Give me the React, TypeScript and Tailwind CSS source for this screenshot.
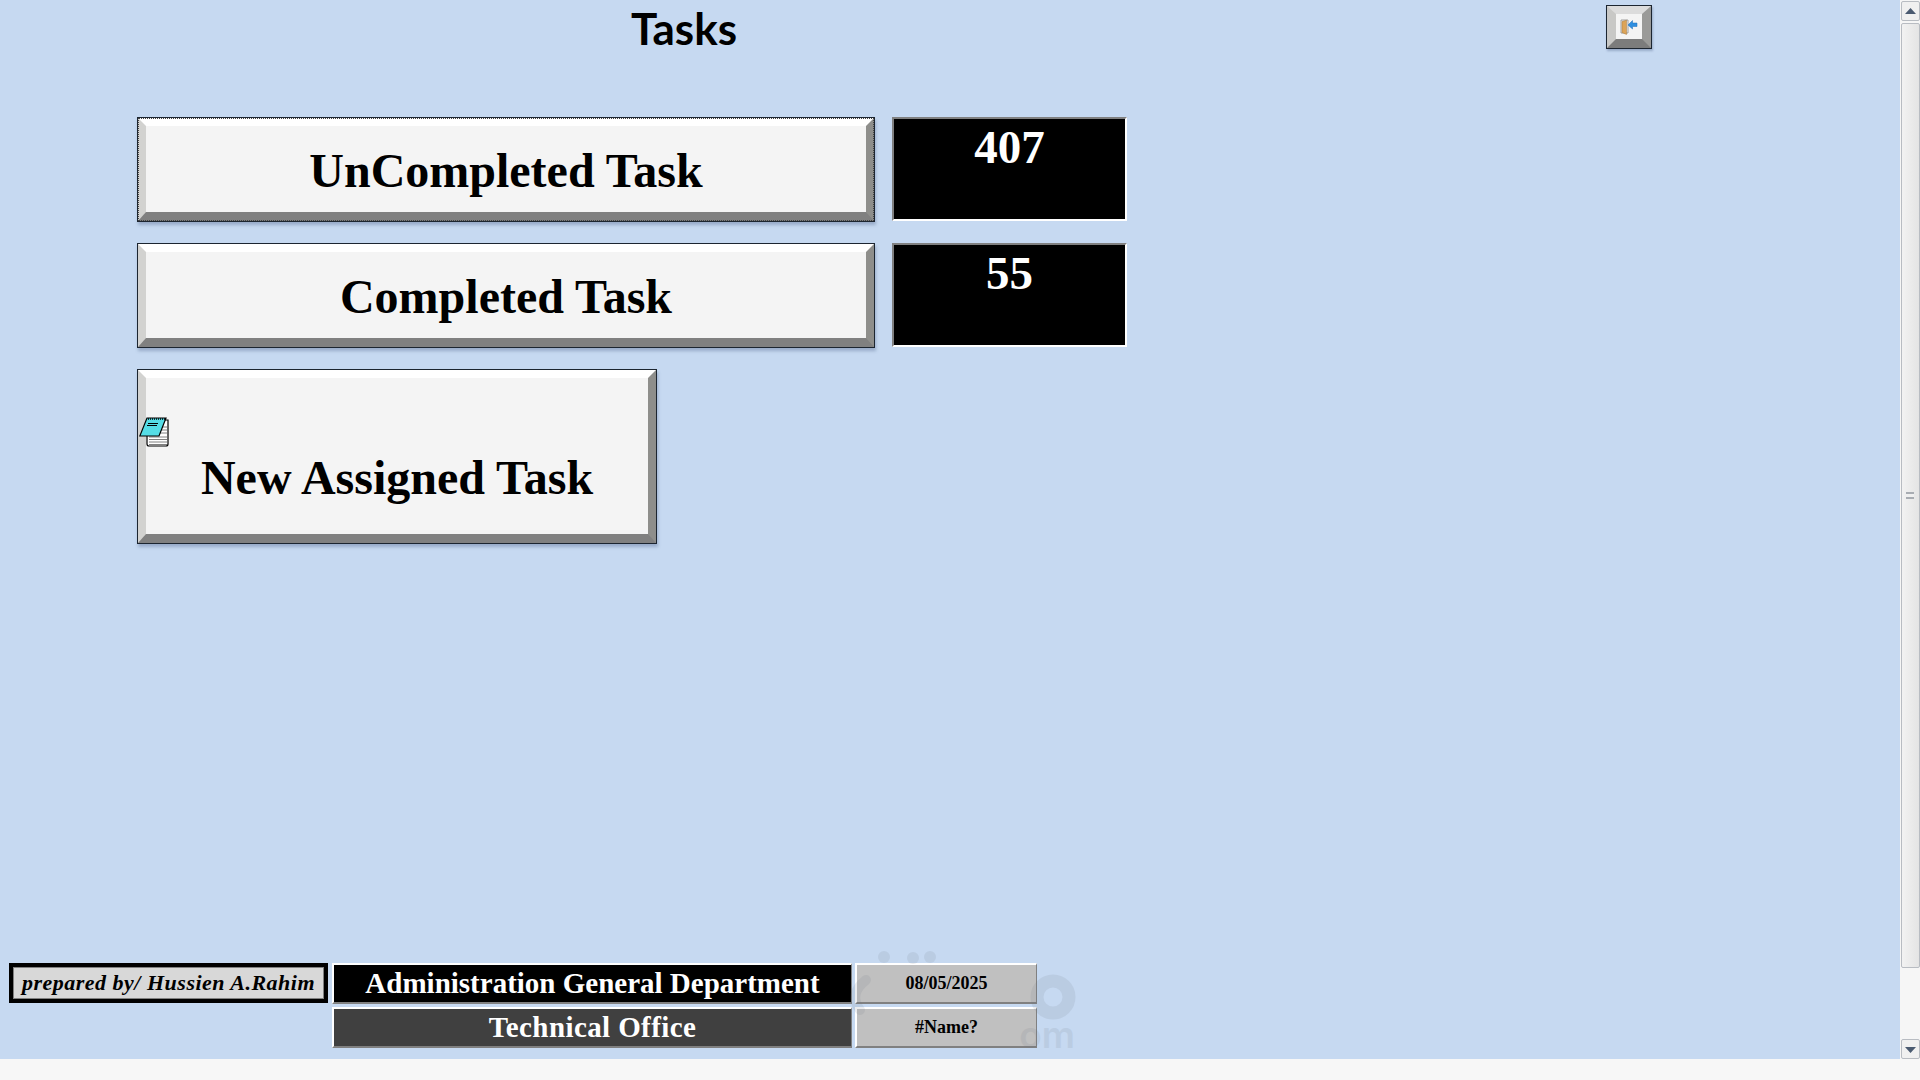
const serif = "font-['Liberation_Serif',serif]";

function BevelButton({ label, focused, className }: { label: string; focused?: boolean; className: string }) {
  return (
    <div className={`border border-[#1c2530] shadow-[1px_3px_3px_rgba(70,90,130,0.35)] ${className}`}>
      <div className="relative flex h-full items-center justify-center border-t-[8px] border-r-[8px] border-b-[9px] border-l-[8px] border-t-white border-r-[#8e8e8b] border-b-[#808080] border-l-[#d2d2d0] bg-[#f4f4f4] pt-[4px]">
        <span className={`${serif} text-[48px] leading-none font-bold text-black`}>{label}</span>
        {focused && <div className="absolute -top-[8px] -right-[8px] -bottom-[9px] -left-[8px] border border-dotted border-[#444444]" />}
      </div>
    </div>
  );
}

function ValueBox({ value }: { value: string }) {
  return (
    <div className={`${serif} h-[104px] w-[235px] border-t-2 border-r-2 border-b-2 border-l-2 border-t-[#808080] border-r-white border-b-white border-l-[#808080] bg-black text-center text-[47px] leading-[57px] font-bold text-white`}>
      {value}
    </div>
  );
}

function FooterCell({ children, className }: { children: React.ReactNode; className: string }) {
  return (
    <div className={`${serif} flex h-[41px] items-center justify-center border-t-2 border-r border-b-2 border-l-2 border-t-white border-r-[#808080] border-b-[#808080] border-l-white font-bold ${className}`}>
      {children}
    </div>
  );
}

function NotepadIcon() {
  return (
    <svg width="30" height="30" viewBox="0 0 30 30" className="absolute top-[48px] -left-[7px]">
      <path d="M8 3H29V27Q29 29 27 29H10Q8 29 8 27Z" fill="#fff" stroke="#000" strokeWidth="1.2" />
      <path d="M10 20H28M10 22.5H28M10 25H28M10 27.5H28M22 10H28M21 13H28M20 16H28" stroke="#808080" strokeWidth="1" />
      <path d="M8 1H27L20 19H0.8Z" fill="#55dde6" stroke="#000" strokeWidth="1.2" />
      <path d="M9 6.5H19M8 8.5H18" stroke="#000" strokeWidth="1.1" />
      <path d="M9 2H26" stroke="#000" strokeWidth="1.6" strokeDasharray="1 1" />
    </svg>
  );
}

function ExitIcon() {
  return (
    <svg width="18" height="16" viewBox="0 0 18 16">
      <path d="M1 1H8V14H1Z" fill="#f4f4f4" stroke="#8a8a8a" strokeWidth="0.8" />
      <path d="M2 2.5L6.5 1.2V15.5L2 13.5Z" fill="#dca458" stroke="#a87838" strokeWidth="0.5" />
      <path d="M17 4H12.5V1.5L8 6L12.5 10V7.5H17Z" fill="#2f8fe0" stroke="#1c6cb8" strokeWidth="0.5" />
    </svg>
  );
}

// faint site watermark, only the part that clears the grey cells is readable
function Watermark() {
  return (
    <div className="pointer-events-none absolute top-[950px] left-[842px] opacity-[0.12]">
      <svg width="240" height="112" viewBox="0 0 240 112" fill="#6b7480">
        <circle cx="42" cy="7" r="6" />
        <circle cx="71" cy="8" r="6" />
        <circle cx="88" cy="7" r="6" />
        <circle cx="211" cy="47" r="16" fill="none" stroke="#6b7480" strokeWidth="13" />
        <path d="M24 30Q6 44 18 60" fill="none" stroke="#6b7480" strokeWidth="10" strokeLinecap="round" />
        <text x="233" y="98" textAnchor="end" fontFamily="Inter, sans-serif" fontSize="37" fontWeight="600">om</text>
      </svg>
    </div>
  );
}

function ScrollButton({ up }: { up?: boolean }) {
  return (
    <div className="flex h-[20px] w-[19px] items-center justify-center rounded-[2px] border border-[#b8bcc2] bg-[#f0f0f0]">
      <svg width="11" height="7" viewBox="0 0 11 7">
        <path d={up ? "M5.5 0L11 6H0Z" : "M0 1H11L5.5 7Z"} fill="#4a5a70" />
      </svg>
    </div>
  );
}

function Scrollbar() {
  return (
    <div className="flex w-[20px] flex-col items-center bg-[#f6f6f6] pt-px">
      <ScrollButton up />
      <div className="mt-[2px] flex h-[945px] w-[19px] items-center justify-center rounded-[2px] border border-[#b8bcc2] bg-gradient-to-r from-[#f2f2f2] to-[#e4e4e4]">
        <div className="h-[7px] w-[8px] border-y-2 border-[#a8acb2] bg-[#f0f0f0]" />
      </div>
      <div className="flex-1" />
      <ScrollButton />
    </div>
  );
}

export default function App() {
  return (
    <div className="relative flex h-[1080px] w-[1920px] flex-col overflow-hidden bg-[#f7f7f7]">
      <div className="flex h-[1059px]">
        <div className="flex w-[1900px] flex-col bg-[#c6d9f1]">
          <div className="flex h-[117px] items-start">
            <div className="w-[1368px] pt-[4px] text-center font-['Lato',sans-serif] text-[44px] leading-[48px] font-bold text-black">
              Tasks
            </div>
            <div className="mt-[5px] ml-[238px] h-[44px] w-[46px] border border-[#1c2530] shadow-[1px_2px_2px_rgba(70,90,130,0.35)]">
              <div className="flex h-full items-center justify-center border-t-[8px] border-r-[9px] border-b-[9px] border-l-[9px] border-t-[#dcdcdc] border-r-[#9a9a98] border-b-[#7c7c7c] border-l-[#c8c8c6] bg-[#f4f4f4]">
                <ExitIcon />
              </div>
            </div>
          </div>

          <div className="flex flex-col gap-[21px] pl-[137px]">
            <div className="flex gap-[17px]">
              <BevelButton label="UnCompleted Task" focused className="h-[105px] w-[738px]" />
              <ValueBox value="407" />
            </div>
            <div className="flex gap-[17px]">
              <BevelButton label="Completed Task" className="h-[105px] w-[738px]" />
              <ValueBox value="55" />
            </div>
            <div className="relative h-[175px] w-[520px]">
              <BevelButton label="New Assigned Task" className="h-full w-full [&>div]:items-end [&>div]:pb-[32px]" />
              <div className="absolute top-0 left-[9px]">
                <NotepadIcon />
              </div>
            </div>
          </div>

          <div className="mt-auto flex gap-[4px] pb-[11px] pl-[9px]">
            <div className="h-[40px] w-[319px] self-start border-[4px] border-black bg-[#d8d8d8] text-center shadow-[inset_0_0_0_1px_#808080]">
              <span className={`${serif} text-[22px] leading-[32px] font-bold tracking-[0.5px] text-black italic`}>
                prepared by/ Hussien A.Rahim
              </span>
            </div>
            <div className="flex w-[520px] flex-col gap-[3px]">
              <FooterCell className="bg-black text-[29px] text-white">Administration General Department</FooterCell>
              <FooterCell className="bg-[#404040] text-[29px] tracking-[0.4px] text-white">Technical Office</FooterCell>
            </div>
            <div className="-ml-[1px] flex w-[182px] flex-col gap-[3px]">
              <FooterCell className="bg-[#c0c0c0] text-[18px] text-black">08/05/2025</FooterCell>
              <FooterCell className="bg-[#c0c0c0] text-[18px] text-black">#Name?</FooterCell>
            </div>
          </div>
        </div>
        <Scrollbar />
      </div>
      <Watermark />
    </div>
  );
}
